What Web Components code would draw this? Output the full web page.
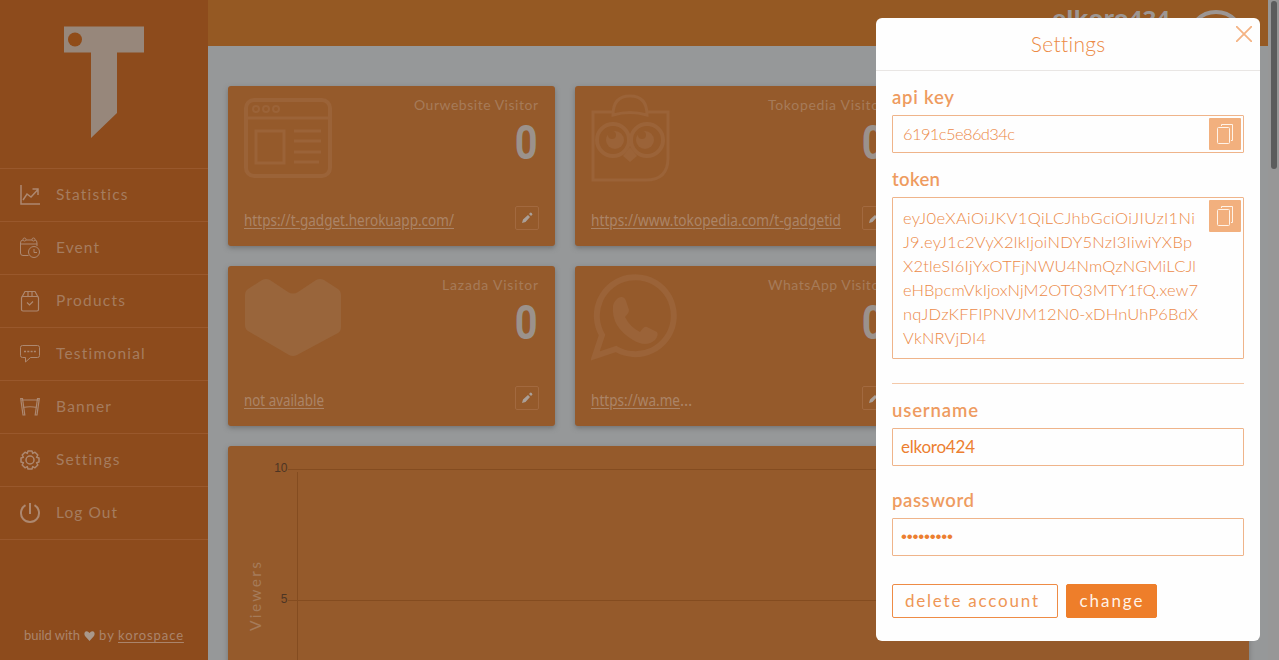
<!DOCTYPE html>
<html lang="en">
<head>
<meta charset="utf-8">
<title>Dashboard</title>
<style>
body{margin:0;height:660px;overflow:hidden;background:#979899;font-family:Lato,"Liberation Sans",sans-serif}
</style>
</head>
<body>
<app-shell></app-shell>
<script>
function element(name, html, setup) {
  const template = document.createElement('template');
  template.innerHTML = html;
  customElements.define(name, class extends HTMLElement {
    constructor() {
      super();
      this.attachShadow({mode: 'open'}).append(template.content.cloneNode(true));
    }
    connectedCallback() { if (setup) setup(this, this.shadowRoot); }
  });
}

element('app-shell', `
<style>
:host{display:grid;grid-template-columns:208px 1060px 11px;height:660px;position:relative;overflow:hidden}
main{display:flex;flex-direction:column;background:#969899;min-width:0;overflow:hidden}
section{display:grid;grid-template-columns:repeat(3,327px);grid-auto-rows:160px;gap:20px;padding:40px 20px 20px}
visitor-chart{margin-left:20px}
.row{grid-column:1}
</style>
<side-nav></side-nav>
<main>
  <top-bar></top-bar>
  <section>
    <stat-card name="Ourwebsite Visitor" w="124" link="https://t-gadget.herokuapp.com/" lw="210">
      <svg width="88" height="80" viewBox="0 0 88 80" fill="none" stroke="#9b6338" stroke-width="4"><rect x="2" y="2" width="84" height="76" rx="8"/><path d="M2 20h84M50 33h27M50 43h27M50 54h27M50 64h25" stroke-width="3"/><rect x="12" y="33" width="28" height="32" stroke-width="3"/><g stroke-width="2"><circle cx="12" cy="11" r="3"/><circle cx="22" cy="11" r="3"/><circle cx="32" cy="11" r="3"/></g></svg>
    </stat-card>
    <stat-card name="Tokopedia Visitor" w="117" link="https://www.tokopedia.com/t-gadgetid" lw="250">
      <svg style="margin-top:-4px" width="80" height="88" viewBox="0 0 80 88" fill="none" stroke="#9b6338" stroke-width="3"><path d="M22 18H2V86H55Q77 86 77 64V18H55"/><path d="M22 21Q22 2 39 2t17 19q-17-5-34 0z"/><g stroke-width="4"><circle cx="22" cy="46" r="16"/><circle cx="56" cy="46" r="16"/></g><g fill="#9b6338" stroke="none"><circle cx="24" cy="46" r="9"/><circle cx="54" cy="46" r="9"/><path d="M39 53l7 9-7 6-7-6z"/></g><g fill="#955a2b" stroke="none"><circle cx="21" cy="41" r="4"/><circle cx="51" cy="41" r="4"/></g></svg>
    </stat-card>
    <stat-card class="row" name="Lazada Visitor" w="96" link="not available" lw="80">
      <svg width="98" height="80" viewBox="0 0 98 80"><path d="M4 11L18 2q4-2 8 0l18 12q5 3 10 0L72 2q4-2 8 0l14 9q3 2 3 6v32q0 4-3 6L53 77q-4 2-8 0L4 53q-3-2-3-6V17q0-4 3-6z" fill="#99653b"/></svg>
    </stat-card>
    <stat-card name="WhatsApp Visitor" w="117" link="https://wa.me" lw="89" more="…">
      <svg style="margin-top:-4px" width="88" height="88" viewBox="0 0 88 88"><path d="M4 82l7-21A38.500 38.500 0 1 1 25 75z" fill="none" stroke="#9b6338" stroke-width="6"/><path d="M27 24q6-3 8 3l3 9q0 3-4 7 5 10 15 15 4-6 7-5l10 5q2 3-2 8-9 8-22 0Q20 53 22 32q1-5 5-8z" fill="#9b6338"/></svg>
    </stat-card>
  </section>
  <visitor-chart></visitor-chart>
</main>
<scroll-rail></scroll-rail>
<settings-dialog></settings-dialog>`);

element('scroll-rail', `
<style>:host{display:block;background:#979797}div{width:6px;height:168px;margin:1px 0 0 3px;border-radius:3px;background:#5c5c5c}</style><div></div>`);

element('top-bar', `
<style>
:host{display:flex;height:46px;background:#955923;color:#9c9693;box-sizing:border-box;padding:8px 23px 0 0;justify-content:flex-end;gap:17px;flex:none;overflow:hidden}
b{font:bold 22px/22px "Noto Sans",sans-serif;margin-top:-2px}
i{width:50px;height:50px;border:4px solid #9c9693;border-radius:50%;margin-top:2px}
</style><b><fit-text squeeze w="118">elkoro424</fit-text></b><i></i>`);

element('side-nav', `
<style>
:host{display:flex;flex-direction:column;background:#8d4b1c;height:660px;color:#a57c5f;font-size:15.5px}
.logo{height:168px;flex:none;display:flex;justify-content:center;padding-top:26px;box-sizing:border-box}
nav{border-bottom:1px solid #99582c}
nav svg{width:20px;height:20px;overflow:visible;fill:none;stroke:#ad8870;stroke-width:1.5}
footer{margin:auto 0 16px 24px;font-size:13px;line-height:18px;color:#aa846b;white-space:nowrap}
u{text-underline-offset:2px}
.heart{width:11px;height:10px;margin:0 4px;vertical-align:-1px}
</style>
<div class="logo"><svg width="80" height="113" viewBox="0 0 80 113"><path d="M0 .5h80V26.5H53V87L27 112V26.5H0z" fill="#97877b"/><circle cx="11" cy="13.5" r="7" fill="#904c19"/></svg></div>
<nav>
<nav-item label="Statistics" w="72"><svg viewBox="0 0 20 20"><path d="M1 0v19h19"/><path d="M3 15l4-6 4 3 7-7.500M12.500 4H18v6"/></svg></nav-item>
<nav-item label="Event" w="43"><svg viewBox="0 0 20 20" style="stroke-width:1"><path d="M8.500 17.500H3q-2.500 0-2.500-2.500V5Q.5 2 3 2M6 2h6M15 2q2 0 2 3v3M.5 6H17"/><circle cx="4.500" cy="1.500" r="1.500"/><circle cx="13.500" cy="1.500" r="1.500"/><circle cx="14" cy="14" r="5.500"/><path d="M14 11v3.500h3"/></svg></nav-item>
<nav-item label="Products" w="69"><svg viewBox="0 0 20 20" style="stroke-width:1.200"><rect x="1.500" y="5.500" width="17" height="14.500" rx="1.500"/><path d="M2 6l3-5.500h10L18 6M8 6V.5M12 6V.5M7 11.500l2.500 2.500L13 10.500"/></svg></nav-item>
<nav-item label="Testimonial" w="89"><svg viewBox="0 0 20 20" style="stroke-width:1"><path d="M2.500 1.500h15q2 0 2 2v8q0 2-2 2H10.500L5.500 18v-4.500h-3q-2 0-2-2v-8q0-2 2-2z"/><path d="M4 7.500h12" stroke-width="1.500" stroke-dasharray="2 1.300"/></svg></nav-item>
<nav-item label="Banner" w="55"><svg viewBox="0 0 20 20" style="stroke-width:1.200"><path d="M1.500 3h17M3 10.500q7-1.500 14 0M.7 1.500h1.800L4.800 18H3zM19.300 1.500h-1.800L15.200 18H17z"/></svg></nav-item>
<nav-item label="Settings" w="63"><svg viewBox="0 0 20 20"><circle cx="10" cy="10" r="4"/><path d="M8 1h4l.7 2.400 2.300-1.200L17.800 5l-1.200 2.300L19 8v4l-2.400.7 1.200 2.300-2.800 2.800-2.300-1.200L12 19H8l-.7-2.400L5 17.800 2.200 15l1.200-2.300L1 12V8l2.400-.7L2.200 5 5 2.200l2.300 1.200z" stroke-linejoin="round"/></svg></nav-item>
<nav-item label="Log Out" w="61"><svg viewBox="0 0 20 20"><path stroke-width="2" d="M10 0v11M5.500 2.200a9 9 0 1 0 9 0"/></svg></nav-item>
</nav>
<footer><fit-text w="56">build with</fit-text><svg class="heart" viewBox="0 0 11 10"><path d="M5.500 10L1 5Q-.5 2 1.500.6T5.500 2Q7.500-.8 9.500.6T10 5z" fill="#a9988b"/></svg><fit-text w="15">by</fit-text><span style="padding-left:4px"><u><fit-text w="65">korospace</fit-text></u></span></footer>`);

element('nav-item', `
<style>
:host{display:flex;align-items:center;gap:16px;height:52px;padding-left:20px;border-top:1px solid #99582c}
::slotted(svg){flex:none}
fit-text{padding-bottom:2px}
</style><slot></slot><fit-text></fit-text>`,
(host, root) => {
  const t = root.querySelector('fit-text');
  t.textContent = host.getAttribute('label');
  t.setAttribute('w', host.getAttribute('w'));
});

element('stat-card', `
<style>
:host{display:flex;flex-direction:column;justify-content:space-between;box-sizing:border-box;height:160px;padding:8px 16px 16px;border-radius:3px;background:#955a2b;box-shadow:0 2px 5px #5558;color:#a67b59}
.top,.bottom{display:flex;justify-content:space-between}
.pic{padding-top:4px;height:90px}
.info{display:flex;flex-direction:column;align-items:flex-end;padding-right:1px}
.name{font-size:14px;line-height:22px}
.num{font:bold 48px/53px Roboto,sans-serif;color:#9b928c;transform:scaleX(.83);transform-origin:right}
.bottom{align-items:flex-end}
.link{font:15.500px/24px "Noto Sans",sans-serif;color:#ab8467;margin-bottom:-2px;white-space:nowrap}
.link u{text-underline-offset:2px}
.edit{box-sizing:border-box;width:24px;height:24px;border:1px solid #a2693f;display:flex;align-items:center;justify-content:center;border-radius:2px}
</style>
<div class="top"><div class="pic"><slot></slot></div><div class="info"><span class="name"><fit-text></fit-text></span><span class="num">0</span></div></div>
<div class="bottom"><span class="link"><u><fit-text squeeze></fit-text></u><span class="more"></span></span><span class="edit"><svg width="12" height="12" viewBox="0 0 12 12" fill="#aaa099"><path d="M1 11l1-3.500L7 3l2 2-4.500 5zM8 2l1.500-1.500q1.500 0 2 2L10 4z"/></svg></span></div>`,
(host, root) => {
  const [name, link] = root.querySelectorAll('fit-text');
  name.textContent = host.getAttribute('name');
  name.setAttribute('w', host.getAttribute('w'));
  link.textContent = host.getAttribute('link');
  link.setAttribute('w', host.getAttribute('lw'));
  root.querySelector('.more').textContent = host.getAttribute('more') || '';
});

element('visitor-chart', `
<style>
:host{display:block;width:1021px;height:230px;flex:none;border-radius:3px;background:#955a2b;box-shadow:0 2px 5px #5558}
svg{display:block}
.tick{font:12px "Liberation Sans",sans-serif;fill:#4d3524;text-anchor:end}
.axis{font:15.500px Lato,sans-serif;fill:#a57b5a}
</style>
<svg width="1021" height="214"><path d="M60 23.500H1021M60 154.500H1021M69.500 26V214" stroke="#844c20"/><text class="tick" x="59.500" y="26">10</text><text class="tick" x="59.500" y="157">5</text><text class="axis" transform="translate(33 185) rotate(-90)" textLength="69">Viewers</text></svg>`);

element('settings-dialog', `
<style>
:host{position:absolute;left:876px;top:18px;width:384px;height:623px;border-radius:6px;background:#fefefe;color:#ee9b60;display:flex;flex-direction:column}
header{height:50px;padding-bottom:2px;border-bottom:1px solid #e9e6e4;display:flex;justify-content:center;align-items:center;font-size:21px;font-weight:300;color:#ec8a45}
.close{position:absolute;right:8px;top:8px}
.body{padding:14px 16px 0;display:flex;flex-direction:column}
label{display:block;font-size:18.500px;font-weight:600;line-height:24px;margin-bottom:6px}
field-box+label{margin-top:14px}
hr{border:0;height:1px;background:#f4c9a9;margin:24px 0 14px;width:100%}
.gap{margin-top:22px!important}
.mono{font-weight:300;color:#ec8a48}
.buttons{display:flex;gap:8px;margin-top:28px}
.line{display:block;height:24px}
.dots{font-family:"Liberation Sans",sans-serif;position:relative;top:-1px}
</style>
<header><fit-text w="74">Settings</fit-text></header>
<svg class="close" width="16" height="16" viewBox="0 0 16 16" stroke="#f4b383" stroke-width="1.800"><path d="M0 0l16 16M16 0L0 16"/></svg>
<div class="body">
<label><fit-text w="62">api key</fit-text></label>
<field-box copy class="mono"><span class="line"><fit-text w="112">6191c5e86d34c</fit-text></span></field-box>
<label><fit-text w="48">token</fit-text></label>
<field-box copy tall class="mono"><span class="line"><fit-text w="292">eyJ0eXAiOiJKV1QiLCJhbGciOiJIUzI1Ni</fit-text></span><span class="line"><fit-text w="289">J9.eyJ1c2VyX2lkIjoiNDY5NzI3IiwiYXBp</fit-text></span><span class="line"><fit-text w="293">X2tleSI6IjYxOTFjNWU4NmQzNGMiLCJl</fit-text></span><span class="line"><fit-text w="295">eHBpcmVkIjoxNjM2OTQ3MTY1fQ.xew7</fit-text></span><span class="line"><fit-text w="295">nqJDzKFFIPNVJM12N0-xDHnUhP6BdX</fit-text></span><span class="line"><fit-text w="83">VkNRVjDI4</fit-text></span></field-box>
<hr>
<label><fit-text w="86">username</fit-text></label>
<field-box input><fit-text w="74">elkoro424</fit-text></field-box>
<label class="gap"><fit-text w="82">password</fit-text></label>
<field-box input><fit-text class="dots" w="52">•••••••••</fit-text></field-box>
<div class="buttons"><action-button style="width:166px"><fit-text w="133">delete account</fit-text></action-button><action-button primary style="width:91px"><fit-text w="63">change</fit-text></action-button></div>
</div>`);

element('field-box', `
<style>
:host{display:block;position:relative;box-sizing:border-box;height:38px;border:1px solid #efb48a;padding:6px 10px;font-size:16.500px;line-height:24px;white-space:nowrap;border-radius:1px}
:host([tall]){height:162px;padding-top:8px}
:host([input]){padding-left:8px;color:#ec7f31;font-size:17px}
.copy{display:none;position:absolute;right:2px;top:2px;width:32px;height:32px;background:#f2b07e;border-radius:1px;align-items:center;justify-content:center}
:host([copy]) .copy{display:flex}
</style><slot></slot><span class="copy"><svg width="16" height="20" viewBox="0 0 16 20" fill="none" stroke="#fff3e8"><rect x=".5" y="3.500" width="12" height="16" rx="1"/><path d="M4.500 2V.5h11v16H14"/></svg></span>`);

element('action-button', `
<style>
:host{display:flex;box-sizing:border-box;height:34px;align-items:center;justify-content:center;border:1px solid #ee8b45;color:#ee9655;font-size:17px;border-radius:2px;padding:0 7px 2px 0}
:host([primary]){background:#ee7e2a;color:#fff2e6;border-color:#ee7e2a;padding-right:1px}
</style><slot></slot>`);

/* Inline run of text that spans "w" pixels: by tracking, or by horizontal scale with "squeeze". */
element('fit-text', `<style>:host{display:inline-block;white-space:nowrap;text-decoration:inherit}</style><slot></slot>`,
host => {
  const target = Number(host.getAttribute('w'));
  const count = host.textContent.length;
  if (!target || count < 2) return;
  host.style.letterSpacing = '0px';
  const natural = host.getBoundingClientRect().width;
  if (host.hasAttribute('squeeze')) {
    host.style.transformOrigin = 'left';
    host.style.transform = 'scaleX(' + target / natural + ')';
    host.style.marginRight = target - natural + 'px';
    return;
  }
  const spacing = (target - natural) / (count - 1);
  host.style.letterSpacing = spacing + 'px';
  host.style.marginRight = -spacing + 'px';
});
</script>
</body>
</html>
